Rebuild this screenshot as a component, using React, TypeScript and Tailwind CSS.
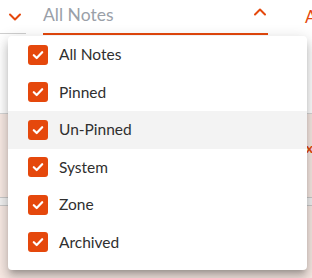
import { ChevronDown, ChevronUp } from "lucide-react";

const options = ["All Notes", "Pinned", "Un-Pinned", "System", "Zone", "Archived"];

const CheckBox = () => (
  <span className="flex h-5 w-5 items-center justify-center rounded-[3px] bg-[#e5480c]">
    <svg width="20" height="20" viewBox="0 0 20 20" fill="none">
      <path
        d="M5.8 10.2 L8.7 13 L14.2 7.2"
        stroke="white"
        strokeWidth="2.2"
        strokeLinecap="round"
        strokeLinejoin="round"
      />
    </svg>
  </span>
);

export default function App() {
  return (
    <div className="relative h-[278px] w-[312px] overflow-hidden bg-white font-['Lato','Noto_Sans',sans-serif]">
      {/* page behind the menu */}
      <div className="flex h-[113px] flex-col">
        <div className="flex h-[36px] items-start">
          <div className="flex h-[34px] w-[26px] shrink-0 items-center justify-center border-b border-[#cfcfcf] pl-[4px]">
            <ChevronDown className="h-[20px] w-[20px] text-[#e5480c]" strokeWidth={2.4} />
          </div>
          <div className="ml-[17px] flex h-[35px] w-[225px] shrink-0 items-center justify-between border-b-2 border-[#e5480c] pb-[3px]">
            <span className="text-[17.5px] text-[#9aa0a8]">All Notes</span>
            <ChevronUp className="-mr-[2px] mb-[6px] h-[20px] w-[20px] text-[#e5480c]" strokeWidth={2.4} />
          </div>
          <span className="ml-[37px] mt-[4px] shrink-0 text-[17px] text-[#e5480c]">A</span>
        </div>
      </div>
      <div className="h-[165px] border-t border-[#d6d6d6] bg-[#f7e9e3]">
        <div className="mt-[83px] h-[9px] border-y border-[#c9c9c9] bg-[#f1f1f1]" />
        <div className="absolute right-[-1px] top-[137px] text-[14px] font-bold text-[#e5480c]">x</div>
      </div>

      {/* dropdown menu */}
      <div className="absolute left-[8px] top-[36px] w-[299px] rounded-[4px] bg-white pb-[9px] shadow-[0_5px_5px_-3px_rgba(0,0,0,0.2),0_8px_10px_1px_rgba(0,0,0,0.14),0_3px_14px_2px_rgba(0,0,0,0.12)]">
        {options.map((label) => (
          <div
            key={label}
            className={`flex h-[37.5px] items-center gap-[11px] pl-[20px] ${
              label === "Un-Pinned" ? "bg-[#f3f3f3]" : ""
            }`}
          >
            <CheckBox />
            <span className="text-[15.5px] text-[#2f2f2f]">{label}</span>
          </div>
        ))}
      </div>
    </div>
  );
}
